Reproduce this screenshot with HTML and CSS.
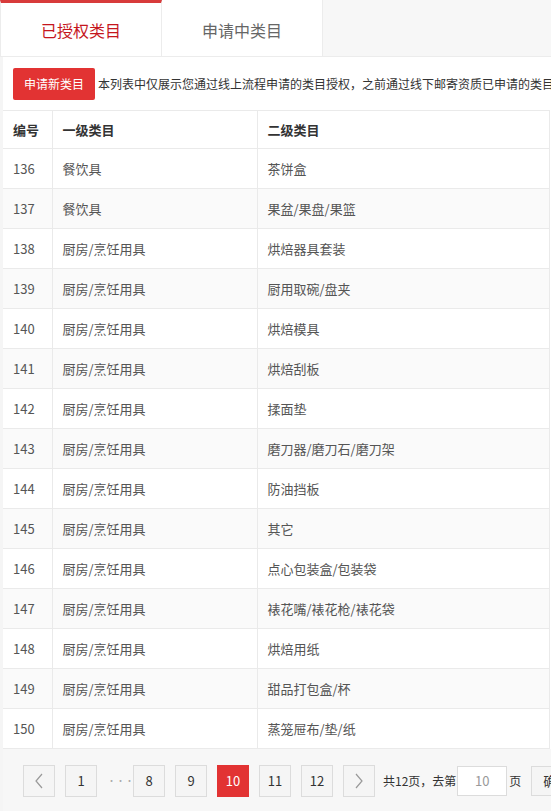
FILE: index.html
```html
<!DOCTYPE html>
<html lang="zh">
<head>
<meta charset="utf-8">
<link rel="stylesheet" href="styles.css">
</head>
<body>
<div class="page">
  <div class="tabs">
    <div class="tab active">已授权类目</div>
    <div class="tab">申请中类目</div>
  </div>
  <div class="panel">
    <div class="toolbar">
      <button class="btn-apply">申请新类目</button>
      <span class="note">本列表中仅展示您通过线上流程申请的类目授权，之前通过线下邮寄资质已申请的类目授权不在此列表中展示</span>
    </div>
    <table class="grid">
      <colgroup><col class="c1"><col class="c2"><col class="c3"></colgroup>
      <thead>
        <tr><th>编号</th><th>一级类目</th><th>二级类目</th></tr>
      </thead>
      <tbody>
        <tr><td>136</td><td>餐饮具</td><td>茶饼盒</td></tr>
        <tr><td>137</td><td>餐饮具</td><td>果盆/果盘/果篮</td></tr>
        <tr><td>138</td><td>厨房/烹饪用具</td><td>烘焙器具套装</td></tr>
        <tr><td>139</td><td>厨房/烹饪用具</td><td>厨用取碗/盘夹</td></tr>
        <tr><td>140</td><td>厨房/烹饪用具</td><td>烘焙模具</td></tr>
        <tr><td>141</td><td>厨房/烹饪用具</td><td>烘焙刮板</td></tr>
        <tr><td>142</td><td>厨房/烹饪用具</td><td>揉面垫</td></tr>
        <tr><td>143</td><td>厨房/烹饪用具</td><td>磨刀器/磨刀石/磨刀架</td></tr>
        <tr><td>144</td><td>厨房/烹饪用具</td><td>防油挡板</td></tr>
        <tr><td>145</td><td>厨房/烹饪用具</td><td>其它</td></tr>
        <tr><td>146</td><td>厨房/烹饪用具</td><td>点心包装盒/包装袋</td></tr>
        <tr><td>147</td><td>厨房/烹饪用具</td><td>裱花嘴/裱花枪/裱花袋</td></tr>
        <tr><td>148</td><td>厨房/烹饪用具</td><td>烘焙用纸</td></tr>
        <tr><td>149</td><td>厨房/烹饪用具</td><td>甜品打包盒/杯</td></tr>
        <tr><td>150</td><td>厨房/烹饪用具</td><td>蒸笼屉布/垫/纸</td></tr>
      </tbody>
    </table>
    <div class="pager">
      <a class="pg arrow"><svg width="10" height="16" viewBox="0 0 10 16"><path d="M8 1 L2 8 L8 15" fill="none" stroke="#999" stroke-width="1.2"/></svg></a>
      <a class="pg">1</a>
      <span class="dots">···</span>
      <a class="pg">8</a>
      <a class="pg">9</a>
      <a class="pg current">10</a>
      <a class="pg">11</a>
      <a class="pg">12</a>
      <a class="pg arrow"><svg width="10" height="16" viewBox="0 0 10 16"><path d="M2 1 L8 8 L2 15" fill="none" stroke="#999" stroke-width="1.2"/></svg></a>
      <span class="total">共12页，去第</span>
      <input class="goto" value="10">
      <span class="unit">页</span>
      <button class="ok">确定</button>
    </div>
  </div>
</div>
</body>
</html>
```
FILE: styles.css
```css
html, body {
  margin: 0;
  padding: 0;
  overflow: hidden;
  background: #f5f5f5;
}
body {
  font-family: "Noto Sans CJK SC", "Noto Sans", sans-serif;
  font-size: 13px;
  color: #333;
}
.page {
  width: 700px;
}
.tabs {
  display: flex;
  height: 56px;
  background: #f7f7f7;
  border-bottom: 1px solid #ececec;
}
.tab {
  width: 161px;
  flex: none;
  box-sizing: border-box;
  background: #fff;
  border-right: 1px solid #ececec;
  display: flex;
  align-items: center;
  justify-content: center;
  font-size: 16px;
  color: #666;
  padding-top: 3px;
}
.tab.active {
  width: 162px;
  border-left: 1px solid #ececec;
  border-top: 3px solid #d83b3b;
  padding-top: 0;
  color: #c5161d;
}
.panel {
  margin-left: 3px;
  background: #fff;
}
.toolbar {
  display: flex;
  align-items: center;
  height: 53px;
  padding-left: 10px;
  white-space: nowrap;
  overflow: hidden;
}
.btn-apply {
  flex: none;
  width: 82px;
  height: 32px;
  border: 0;
  border-radius: 2px;
  background: #e23333;
  color: #fff;
  font-family: inherit;
  font-size: 12px;
  padding: 0;
  margin-right: 3px;
}
.note {
  flex: none;
  font-size: 12px;
  color: #333;
}
.grid {
  width: 547px;
  border-collapse: collapse;
  table-layout: fixed;
  border-right: 1px solid #eaeaea;
}
.grid .c1 { width: 49px; }
.grid .c2 { width: 205px; }
.grid th, .grid td {
  text-align: left;
  padding: 0 10px 1px;
  border: 1px solid #eaeaea;
  border-left: none;
  white-space: nowrap;
}
.grid th + th, .grid td + td {
  border-left: 1px solid #eaeaea;
}
.grid th {
  height: 36px;
  font-weight: bold;
  color: #333;
  font-size: 13px;
}
.grid td {
  height: 38px;
  color: #555;
  font-size: 13px;
}
.grid tbody tr:nth-child(even) td {
  background: #fafafa;
}
.pager {
  display: flex;
  align-items: center;
  height: 63px;
  padding-left: 20px;
  background: #f7f7f7;
  white-space: nowrap;
}
.pg {
  width: 30px;
  height: 30px;
  border: 1px solid #dcdcdc;
  background: #f5f5f5;
  display: flex;
  align-items: center;
  justify-content: center;
  color: #333;
  font-size: 13px;
  margin-right: 10px;
  flex: none;
}
.pg.current {
  background: #e23333;
  border-color: #e23333;
  color: #fff;
}
.dots {
  flex: none;
  width: 16px;
  margin-right: 10px;
  text-align: center;
  color: #aaa;
  font-size: 9px;
}
.total {
  flex: none;
  margin-left: -2px;
  font-size: 12px;
  color: #333;
}
.goto {
  flex: none;
  width: 48px;
  height: 28px;
  border: 1px solid #dcdcdc;
  background: #fff;
  text-align: center;
  color: #999;
  font-family: inherit;
  font-size: 13px;
  padding: 0;
  margin: 0 2px 0 1px;
  box-sizing: content-box;
}
.unit {
  flex: none;
  font-size: 12px;
  color: #333;
  margin-right: 10px;
}
.ok {
  flex: none;
  height: 30px;
  width: 50px;
  border: 1px solid #dcdcdc;
  background: #f5f5f5;
  font-family: inherit;
  font-size: 13px;
  color: #333;
}
```
